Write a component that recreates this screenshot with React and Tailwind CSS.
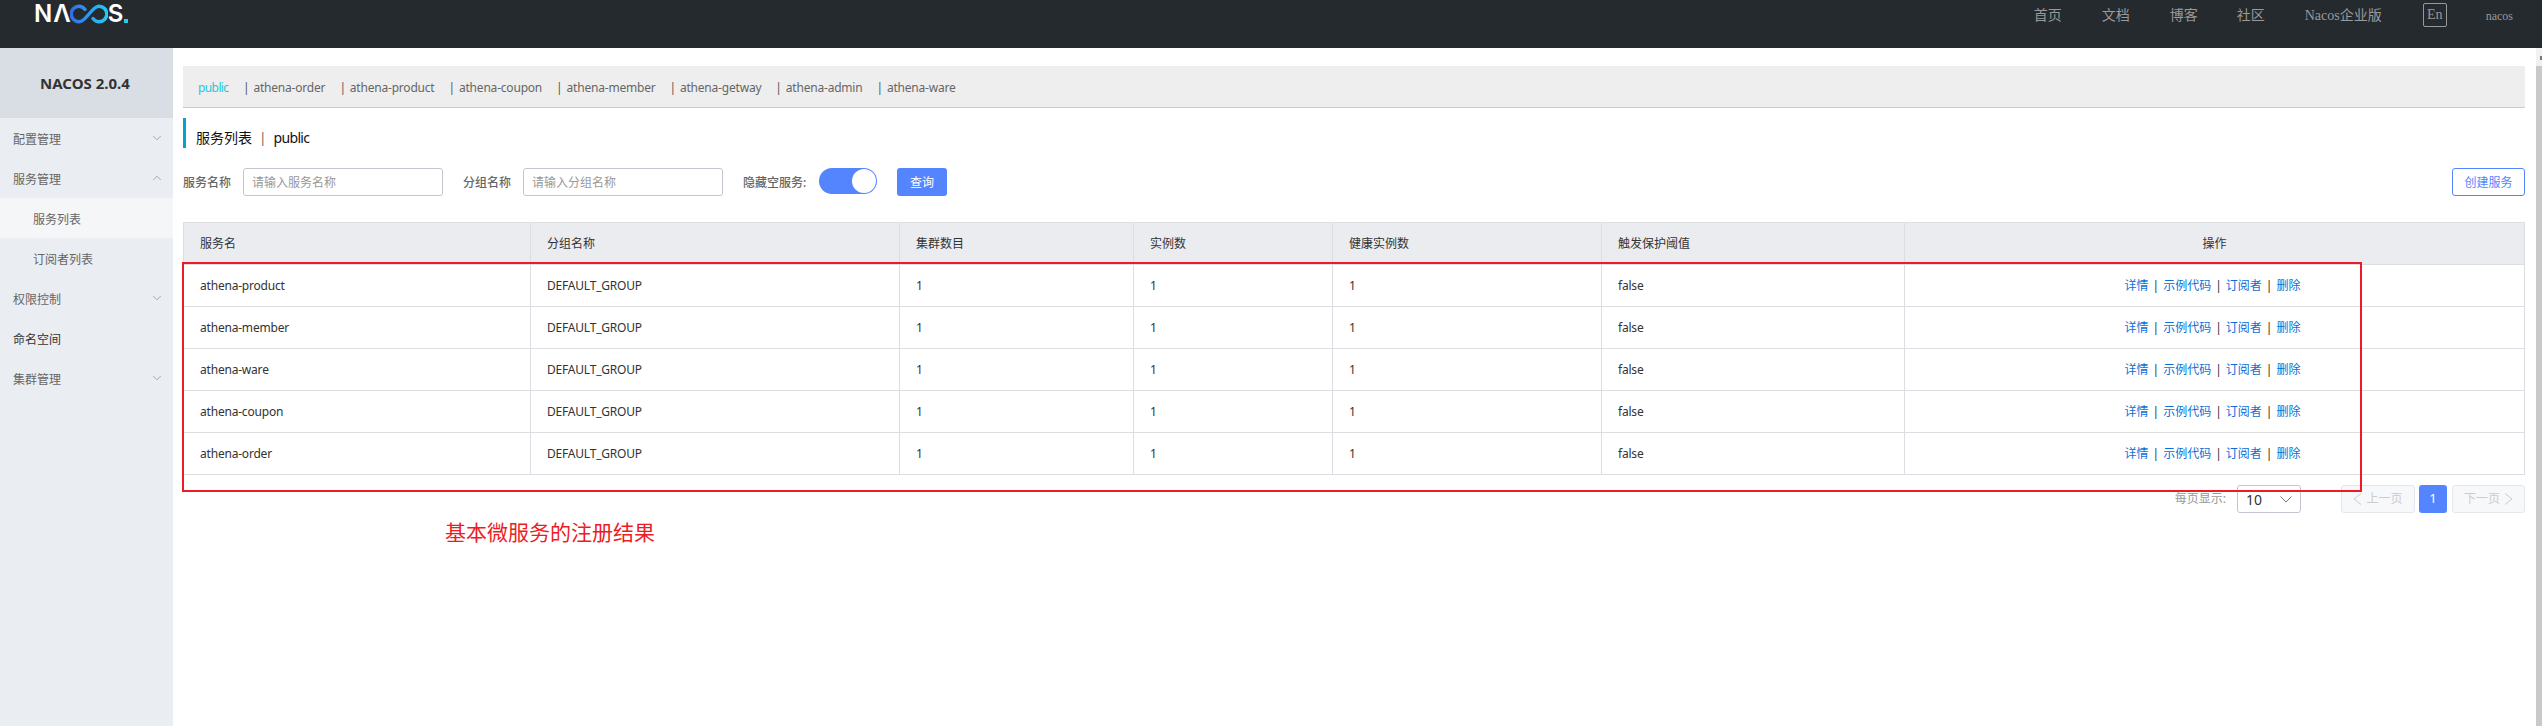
import React from 'react';
import { ChevronDown, ChevronUp } from 'lucide-react';

const sans = { fontFamily: '"Noto Sans", "Noto Sans CJK SC", sans-serif' };

const tabs = ['athena-order', 'athena-product', 'athena-coupon', 'athena-member', 'athena-getway', 'athena-admin', 'athena-ware'];
const services = ['athena-product', 'athena-member', 'athena-ware', 'athena-coupon', 'athena-order'];
const heads = ['服务名', '分组名称', '集群数目', '实例数', '健康实例数', '触发保护阈值'];

function Logo() {
  return (
    <div className="flex items-center h-[28px] ml-[34px] text-white text-[24px] font-semibold leading-none" style={{ fontFamily: 'Inter, sans-serif' }}>
      <span>N</span>
      <span className="ml-[1px]">Λ</span>
      <svg width="38" height="20" viewBox="0 0 38 20" fill="none" className="ml-[-1px]">
        <defs>
          <linearGradient id="inf" x1="0" y1="0" x2="1" y2="0">
            <stop offset="0" stopColor="#2f6fe8" />
            <stop offset="0.5" stopColor="#2f9bf0" />
            <stop offset="1" stopColor="#22cdf0" />
          </linearGradient>
        </defs>
        <path d="M15 5.5C13.5 3.5 11.5 2.2 9 2.2A7.8 7.8 0 0 0 9 17.8C13 17.8 15.5 14 19 10C22.5 6 25 2.2 29 2.2A7.8 7.8 0 0 1 29 17.8C26.5 17.8 24.5 16.5 23 14.5" stroke="url(#inf)" strokeWidth="3.4" strokeLinecap="round" />
      </svg>
      <span>S</span>
      <span className="w-[4px] h-[4px] bg-[#22cdf0] self-end mb-[5px] ml-[1px]"></span>
    </div>
  );
}

function Header() {
  return (
    <div className="h-[48px] bg-[#252a2f] flex justify-between shrink-0">
      <Logo />
      <div className="flex items-start text-[14px] text-[#999]" style={{ fontFamily: '"Liberation Serif", "Noto Sans CJK SC", serif' }}>
        <span className="mt-[5px] w-[68px]">首页</span>
        <span className="mt-[5px] w-[68px]">文档</span>
        <span className="mt-[5px] w-[67px]">博客</span>
        <span className="mt-[5px] w-[68px]">社区</span>
        <span className="mt-[5px] w-[118px]">Nacos企业版</span>
        <span className="mt-[3px] w-[24px] h-[24px] border border-[#999] rounded-[2px] flex items-center justify-center text-[14px] leading-none">En</span>
        <span className="mt-[7px] ml-[39px] mr-[29px] text-[12px]">nacos</span>
      </div>
    </div>
  );
}

function MenuItem({ label, icon, active, sub, dark }) {
  return (
    <div className={`h-[40px] flex items-center justify-between text-[12px] ${sub ? 'pl-[33px]' : 'pl-[13px]'} pr-[9px] ${active ? 'bg-[#f4f6f8]' : ''} ${dark ? 'text-[#333]' : 'text-[#666]'}`}>
      <span className="pt-[4px]">{label}</span>
      {icon === 'down' && <ChevronDown size={14} strokeWidth={1.2} className="text-[#888]" />}
      {icon === 'up' && <ChevronUp size={14} strokeWidth={1.2} className="text-[#888]" />}
    </div>
  );
}

function Sidebar() {
  return (
    <div className="w-[173px] bg-[#eaedf1] shrink-0">
      <div className="h-[70px] bg-[#d9dee4] flex items-center justify-center text-[15px] font-bold text-[#333] pr-[3px]">NACOS 2.0.4</div>
      <MenuItem label="配置管理" icon="down" />
      <MenuItem label="服务管理" icon="up" />
      <MenuItem label="服务列表" sub active />
      <MenuItem label="订阅者列表" sub />
      <MenuItem label="权限控制" icon="down" />
      <MenuItem label="命名空间" dark />
      <MenuItem label="集群管理" icon="down" />
    </div>
  );
}

function TabBar() {
  return (
    <div className="h-[42px] bg-[#eeeeee] border-b border-[#cccccc] flex items-center pl-[15px] pt-[3px] text-[12px] text-[#666] tracking-[-0.2px]">
      <span className="text-[#1fc7e0] mr-[14px] w-[31px] tracking-[-0.6px]">public</span>
      {tabs.map((t) => (
        <span key={t} className="mr-[14px]">
          <span className="mr-[4px] text-[#555]">|</span>
          {t}
        </span>
      ))}
    </div>
  );
}

function SearchForm() {
  return (
    <div className="flex items-start h-[28px] mt-[20px] text-[12px] text-[#666] font-medium">
      <span className="w-[60px] leading-[30px]">服务名称</span>
      <div className="w-[200px] h-[28px] border border-[#c4c6cf] rounded-[3px] pl-[8px] leading-[28px] text-[#999] font-normal">请输入服务名称</div>
      <span className="ml-[20px] w-[60px] leading-[30px]">分组名称</span>
      <div className="w-[200px] h-[28px] border border-[#c4c6cf] rounded-[3px] pl-[8px] leading-[28px] text-[#999] font-normal">请输入分组名称</div>
      <span className="ml-[20px] w-[76px] leading-[30px]">隐藏空服务:</span>
      <div className="w-[58px] h-[26px] bg-[#5584ff] rounded-full flex justify-end p-[1px]">
        <div className="w-[24px] h-[24px] bg-white rounded-full"></div>
      </div>
      <div className="ml-[20px] w-[50px] h-[28px] bg-[#5584ff] rounded-[3px] text-white font-normal leading-[30px] text-center">查询</div>
      <div className="ml-auto w-[73px] h-[28px] border border-[#5584ff] rounded-[3px] text-[#5584ff] font-normal leading-[28px] text-center">创建服务</div>
    </div>
  );
}

function ServiceTable() {
  const widths = ['w-[347px]', 'w-[369px]', 'w-[234px]', 'w-[199px]', 'w-[269px]', 'w-[303px]'];
  return (
    <table className="mt-[26px] w-full table-fixed border-collapse text-[12px] text-[#333] text-left tracking-[-0.2px]">
      <thead>
        <tr className="h-[42px] bg-[#ebecf0]">
          {heads.map((h, i) => (
            <th key={h} className={`${widths[i]} font-normal pl-[16px] pt-[1px] border border-[#dcdee3] tracking-normal`}>{h}</th>
          ))}
          <th className="font-normal text-center pt-[1px] border border-[#dcdee3] tracking-normal">操作</th>
        </tr>
      </thead>
      <tbody>
        {services.map((s) => (
          <tr key={s} className="h-[42px]">
            <td className="pl-[16px] pt-[1px] border border-[#dcdee3]">{s}</td>
            <td className="pl-[16px] pt-[1px] border border-[#dcdee3]">DEFAULT_GROUP</td>
            <td className="pl-[16px] pt-[1px] border border-[#dcdee3]">1</td>
            <td className="pl-[16px] pt-[1px] border border-[#dcdee3]">1</td>
            <td className="pl-[16px] pt-[1px] border border-[#dcdee3]">1</td>
            <td className="pl-[16px] pt-[1px] border border-[#dcdee3]">false</td>
            <td className="text-center pt-[1px] pr-[4px] border border-[#dcdee3] text-[#0a6fd8] tracking-normal">
              详情<span className="mx-[4px] text-[#333]">|</span>示例代码<span className="mx-[4px] text-[#333]">|</span>订阅者<span className="mx-[4px] text-[#333]">|</span>删除
            </td>
          </tr>
        ))}
      </tbody>
    </table>
  );
}

function Pager() {
  return (
    <div className="flex items-center justify-end mt-[10px] h-[28px] text-[12px]">
      <span className="text-[#999]">每页显示:</span>
      <div className="ml-[11px] w-[64px] h-[28px] border border-[#c4c6cf] rounded-[3px] flex items-center justify-between pl-[8px] pr-[8px] text-[14px] text-[#333]">
        <span>10</span>
        <svg width="12" height="7" viewBox="0 0 12 7" fill="none" stroke="#777" strokeWidth="1"><polyline points="0.5,0.5 6,6 11.5,0.5" /></svg>
      </div>
      <div className="ml-[40px] w-[74px] h-[28px] bg-[#f7f8fa] border border-[#e6e7eb] rounded-[3px] flex items-center justify-center text-[#ccc]">
        <svg width="9" height="12" viewBox="0 0 9 12" fill="none" stroke="#ccc" strokeWidth="1"><polyline points="8,0.5 1,6 8,11.5" /></svg>
        <span className="ml-[4px]">上一页</span>
      </div>
      <div className="ml-[4px] w-[28px] h-[28px] bg-[#5584ff] rounded-[3px] text-white text-[13px] flex items-center justify-center">1</div>
      <div className="ml-[5px] w-[73px] h-[28px] bg-[#f7f8fa] border border-[#e6e7eb] rounded-[3px] flex items-center justify-center text-[#ccc]">
        <span className="mr-[4px]">下一页</span>
        <svg width="9" height="12" viewBox="0 0 9 12" fill="none" stroke="#ccc" strokeWidth="1"><polyline points="1,0.5 8,6 1,11.5" /></svg>
      </div>
    </div>
  );
}

function Main() {
  return (
    <div className="relative flex-1 pl-[10px] pr-[11px] pt-[18px]">
      <TabBar />
      <div className="mt-[10px] h-[30px] border-l-[3px] border-[#09a0d0] pl-[10px] pt-[8px] flex items-center text-[14px] text-[#111]">
        服务列表<span className="mx-[7px] font-light">|</span><span className="tracking-[-0.7px]">public</span>
      </div>
      <SearchForm />
      <ServiceTable />
      <Pager />
      {/* annotation drawn on top of the screenshot */}
      <div className="absolute left-[9px] top-[214px] w-[2180px] h-[230px] border-2 border-[#ed1c24]"></div>
      <div className="absolute left-[272px] top-[470px] text-[21px] leading-[28px] text-[#ed1c24]">基本微服务的注册结果</div>
    </div>
  );
}

export default function App() {
  return (
    <div className="w-[2542px] h-[726px] flex flex-col overflow-hidden bg-white" style={sans}>
      <Header />
      <div className="flex flex-1">
        <Sidebar />
        <Main />
        <div className="w-[6px] shrink-0 flex flex-col">
          <div className="h-[18px] bg-[#f1f1f1] flex justify-end pt-[8px]">
            <div className="w-[2px] h-[4px] bg-[#777]"></div>
          </div>
          <div className="flex-1 bg-[#c9c9c9]"></div>
        </div>
      </div>
    </div>
  );
}
